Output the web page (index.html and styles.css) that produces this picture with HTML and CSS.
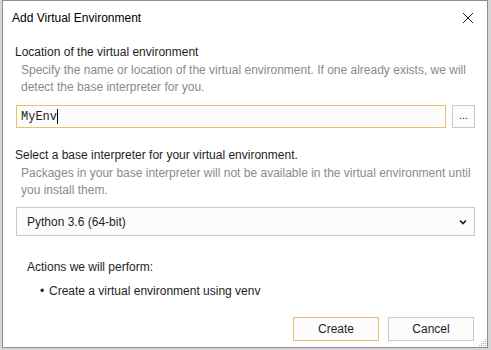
FILE: index.html
```html
<!DOCTYPE html>
<html lang="en">
<head>
    <meta charset="UTF-8">
    <meta name="viewport" content="width=device-width, initial-scale=1.0">
    <title>Add Virtual Environment</title>
    <link rel="stylesheet" href="styles.css">
</head>
<body>
    <div class="dialog">
        <div class="title-bar">
            <span class="title">Add Virtual Environment</span>
            <svg class="close" width="12" height="12" viewBox="0 0 12 12">
                <path d="M1 1 L11 11 M11 1 L1 11" stroke="#1a1a1a" stroke-width="1" fill="none"/>
            </svg>
        </div>
        <div class="content">
            <div class="label">Location of the virtual environment</div>
            <div class="hint">Specify the name or location of the virtual environment. If one already exists, we will detect the base interpreter for you.</div>
            <div class="path-row">
                <div class="text-input"><span>MyEnv</span><span class="caret"></span></div>
                <div class="browse">...</div>
            </div>

            <div class="label second">Select a base interpreter for your virtual environment.</div>
            <div class="hint">Packages in your base interpreter will not be available in the virtual environment until you install them.</div>
            <div class="select">
                <span>Python 3.6 (64-bit)</span>
                <svg width="8" height="6" viewBox="0 0 8 6">
                    <path d="M1 1.5 L4 4.5 L7 1.5" stroke="#1a1a1a" stroke-width="1.6" fill="none"/>
                </svg>
            </div>

            <div class="actions">
                <div>Actions we will perform:</div>
                <ul>
                    <li>Create a virtual environment using venv</li>
                </ul>
            </div>
        </div>
        <div class="footer">
            <div class="btn default">Create</div>
            <div class="btn">Cancel</div>
        </div>
        <svg class="grip" width="9" height="9" viewBox="0 0 9 9">
            <rect x="7" y="1" width="1" height="1" fill="#b0b0b0"/>
            <rect x="5" y="3" width="1" height="1" fill="#b0b0b0"/>
            <rect x="7" y="3" width="1" height="1" fill="#b0b0b0"/>
            <rect x="3" y="5" width="1" height="1" fill="#b0b0b0"/>
            <rect x="5" y="5" width="1" height="1" fill="#b0b0b0"/>
            <rect x="7" y="5" width="1" height="1" fill="#b0b0b0"/>
            <rect x="1" y="7" width="1" height="1" fill="#b0b0b0"/>
            <rect x="3" y="7" width="1" height="1" fill="#b0b0b0"/>
            <rect x="5" y="7" width="1" height="1" fill="#b0b0b0"/>
            <rect x="7" y="7" width="1" height="1" fill="#b0b0b0"/>
        </svg>
    </div>
</body>
</html>
```

FILE: styles.css
```css
body {
    margin: 0;
    padding: 0 3px 2px 2px;
    width: 491px;
    height: 350px;
    box-sizing: border-box;
    background-color: #d6d6d6;
    font-family: 'Liberation Sans', Arial, sans-serif;
    font-size: 12px;
    color: #1e1e1e;
}

.dialog {
    position: relative;
    height: 100%;
    box-sizing: border-box;
    background: white;
    border: 1px solid #8e8e8e;
    display: flex;
    flex-direction: column;
}

.title-bar {
    height: 33px;
    display: flex;
    align-items: center;
    justify-content: space-between;
    padding: 0 13px 0 9px;
}

.title {
    font-size: 12px;
    color: #000;
}

.content {
    padding: 10px 11px 0 12px;
}

.label {
    line-height: 16px;
    color: #1e1e1e;
}

.label.second {
    margin-top: 19px;
}

.hint {
    margin-top: 2px;
    padding-left: 6px;
    line-height: 17px;
    color: #8a8a8a;
}

.path-row {
    display: flex;
    gap: 6px;
    margin-top: 9px;
    padding-left: 1px;
}

.text-input {
    flex: 1;
    height: 23px;
    box-sizing: border-box;
    border: 1px solid #e6c266;
    background-color: #fcfcfc;
    display: flex;
    align-items: center;
    padding-left: 4px;
    font-family: 'Liberation Mono', 'DejaVu Sans Mono', monospace;
    font-size: 12px;
    color: #1e1e1e;
}

.caret {
    width: 1px;
    height: 15px;
    background: #000;
}

.browse {
    width: 23px;
    height: 23px;
    box-sizing: border-box;
    border: 1px solid #c2c9d9;
    background-color: #fcfcfc;
    display: flex;
    align-items: center;
    justify-content: center;
    font-size: 11px;
    line-height: 1;
    padding-bottom: 2px;
    margin-right: 1px;
}

.select {
    margin: 8px 1px 0 1px;
    height: 29px;
    box-sizing: border-box;
    border: 1px solid #c2c9d9;
    background-color: #fcfcfc;
    display: flex;
    align-items: center;
    justify-content: space-between;
    padding: 0 7px 0 10px;
}

.actions {
    margin-top: 23px;
    padding-left: 12px;
    line-height: 16px;
}

.actions ul {
    margin: 8px 0 0 0;
    padding-left: 22px;
    list-style: none;
}

.actions li::before {
    content: "•";
    display: inline-block;
    width: 9px;
    margin-left: -9px;
    font-size: 12px;
}

.footer {
    margin-top: auto;
    display: flex;
    justify-content: flex-end;
    gap: 9px;
    padding: 0 13px 6px 0;
}

.btn {
    width: 86px;
    height: 24px;
    box-sizing: border-box;
    border: 1px solid #c2c9d9;
    background-color: #fcfcfc;
    display: flex;
    align-items: center;
    justify-content: center;
    color: #1e1e1e;
}

.btn.default {
    border-color: #e6c266;
}

.grip {
    position: absolute;
    right: 0;
    bottom: 0;
}
```
